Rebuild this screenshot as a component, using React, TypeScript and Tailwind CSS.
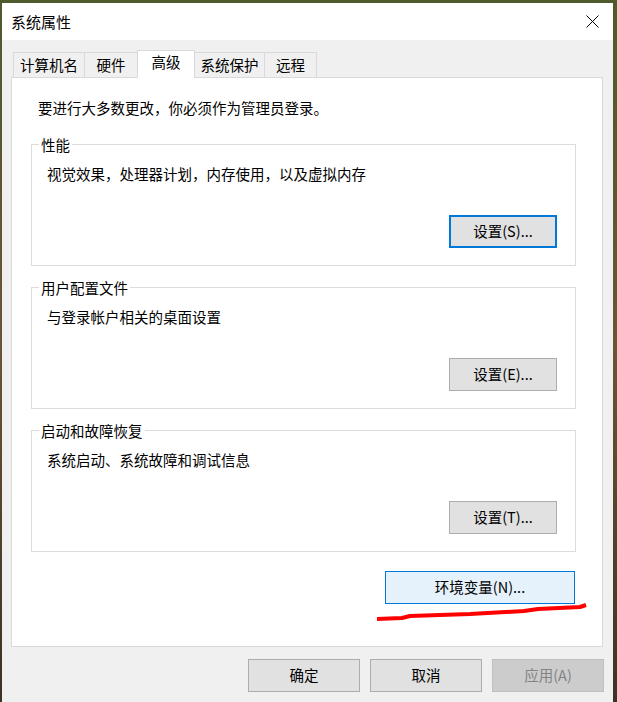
import React from 'react';

const font = { fontFamily: '"Noto Sans CJK SC", "Microsoft YaHei", sans-serif' };

const tabs = [
  { label: '计算机名', w: 'w-[72px]' },
  { label: '硬件', w: 'w-[54px]' },
  { label: '高级', w: 'w-[58px]', active: true },
  { label: '系统保护', w: 'w-[71px]' },
  { label: '远程', w: 'w-[53px]' }
];

const groups = [
  { title: '性能', desc: '视觉效果，处理器计划，内存使用，以及虚拟内存', button: '设置(S)...', focused: true },
  { title: '用户配置文件', desc: '与登录帐户相关的桌面设置', button: '设置(E)...' },
  { title: '启动和故障恢复', desc: '系统启动、系统故障和调试信息', button: '设置(T)...' }
];

const Button = ({
  children,
  className = '',
  focused,
  disabled
}: {
  children: React.ReactNode;
  className?: string;
  focused?: boolean;
  disabled?: boolean;
}) => (
  <button
    className={`h-[33px] flex items-center justify-center text-[14.5px] leading-none ${
      focused
        ? 'border-2 border-[#0078d7] bg-[#e1e1e1] text-black'
        : disabled
        ? 'border border-[#bfbfbf] bg-[#cccccc] text-[#838383]'
        : 'border border-[#adadad] bg-[#e1e1e1] text-black'
    } ${className}`}
  >
    {children}
  </button>
);

const Group = ({ title, desc, button, focused }: (typeof groups)[number]) => (
  <div className="relative ml-[19px] mr-[26px] h-[122px] border border-[#dcdcdc] flex flex-col">
    <span className="absolute -top-[10px] left-[7px] bg-white px-[2px] leading-[20px] text-[14.5px]">
      {title}
    </span>
    <div className="mt-[19px] pl-[15px] leading-[20px] text-[14.5px]">{desc}</div>
    <div className="mt-[31px] flex justify-end pr-[18px]">
      <Button focused={focused} className="w-[108px]">
        {button}
      </Button>
    </div>
  </div>
);

export default function App() {
  return (
    <div
      className="h-[702px] w-[617px] overflow-hidden bg-gradient-to-b from-[#4d5a2c] via-[#6a5434] to-[#3d3224] pl-[2px] pt-[3px] pr-[4px]"
      style={font}
    >
      <div className="h-full flex flex-col bg-[#f0f0f0] text-black">
        {/* title bar */}
        <div className="h-[37px] bg-white flex items-center justify-between">
          <span className="pl-[9px] text-[15px] leading-none">系统属性</span>
          <div className="w-[42px] h-full flex items-center justify-center">
            <svg width="13" height="13" viewBox="0 0 13 13">
              <path d="M0.5 0.5 L12.5 12.5 M12.5 0.5 L0.5 12.5" stroke="#000" strokeWidth="1" />
            </svg>
          </div>
        </div>

        <div className="flex-1 flex flex-col pl-[9px] pr-[10px]">
          {/* tabs */}
          <div className="mt-[10px] ml-[2px] h-[27px] flex items-start relative z-10">
            {tabs.map((tab, i) => (
              <div
                key={tab.label}
                className={`${tab.w} ${i > 0 ? '-ml-px' : ''} flex justify-center border-t border-l border-r border-[#d9d9d9] text-[14.5px] ${
                  tab.active
                    ? 'h-[28px] bg-white pt-[3px] relative z-10'
                    : 'mt-[2px] h-[25px] bg-[#f0f0f0] pt-[4px]'
                }`}
              >
                <span className="leading-[16px]">{tab.label}</span>
              </div>
            ))}
          </div>

          {/* panel */}
          <div className="relative h-[570px] bg-white border border-[#d9d9d9] flex flex-col">
            <div className="mt-[20px] pl-[26px] leading-[20px] text-[14.5px]">
              要进行大多数更改，你必须作为管理员登录。
            </div>

            <div className="mt-[26px] flex flex-col gap-[21px]">
              {groups.map((g) => (
                <Group key={g.title} {...g} />
              ))}
            </div>

            <div className="mt-[19px] flex justify-end pr-[27px]">
              <Button className="w-[190px] !border-[#0078d7] !bg-[#e5f1fb]">环境变量(N)...</Button>
            </div>

            {/* red marker scribble */}
            <svg className="absolute left-[364px] top-[525px]" width="212" height="20" viewBox="0 0 212 20">
              <path
                d="M1 16 L26 15 L34 13 L94 11 L148 8 L162 6 L204 4 L210 2"
                fill="none"
                stroke="#ff0000"
                strokeWidth="4"
                strokeLinejoin="bevel"
              />
            </svg>
          </div>

          {/* dialog buttons */}
          <div className="mt-[12px] flex justify-end gap-[10px] pr-[-1px]">
            <Button className="w-[112px]">确定</Button>
            <Button className="w-[112px]">取消</Button>
            <Button disabled className="w-[112px] -mr-px">
              应用(A)
            </Button>
          </div>
        </div>
      </div>
    </div>
  );
}
